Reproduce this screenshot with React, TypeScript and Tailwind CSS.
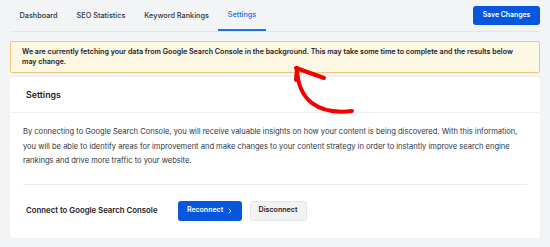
import React from "react";

export default function App() {
  const tabs = ["Dashboard", "SEO Statistics", "Keyword Rankings", "Settings"];
  return (
    <div
      className="relative w-[550px] h-[247px] bg-[#f3f4f6] overflow-hidden text-[#23282d]"
      style={{ fontFamily: "Inter, 'Noto Sans', sans-serif" }}
    >
      <div className="px-[10px]">
        <div className="flex items-end justify-between h-[32px] border-b border-[#e3e5e8]">
          <div className="flex h-full">
            {tabs.map((t) => (
              <div
                key={t}
                className={
                  t === "Settings"
                    ? "flex items-center px-[9.5px] h-full text-[7.3px] font-medium text-[#2271e0] border-b-[2px] border-[#2271e0] -mb-px"
                    : "flex items-center px-[9.5px] h-full text-[7.3px] font-medium text-[#2e3440]"
                }
              >
                <span className="pt-[1px]">{t}</span>
              </div>
            ))}
          </div>
          <div className="self-start mt-[6px] h-[19px] w-[67px] rounded-[3px] bg-[#0657dd] text-white text-[6.9px] font-semibold flex items-center justify-center">
            Save Changes
          </div>
        </div>

        <div className="mt-[9px] border border-[#e8c77c] bg-[#fcf8e3] rounded-[2px] px-[11px] pt-[5px] pb-[5px] text-[7.1px] font-semibold leading-[10px] text-[#1d2027]">
          We are currently fetching your data from Google Search Console in the background. This may take some time to complete and the results below may change.
        </div>

        <div className="mt-[4px] bg-white rounded-[2px] shadow-[0_0_1px_rgba(0,0,0,0.12)] h-[161px] flex flex-col">
          <div className="h-[36px] border-b border-[#f0f1f3] flex items-center px-[16px] text-[8.8px] font-semibold text-[#1d2027]">
            Settings
          </div>
          <div className="px-[13px] pt-[12px]">
            <p className="text-[7.55px] leading-[14.5px] text-[#2e3440]">
              By connecting to Google Search Console, you will receive valuable insights on how your content is being discovered. With this information, you will be able to identify areas for improvement and make changes to your content strategy in order to instantly improve search engine rankings and drive more traffic to your website.
            </p>
            <div className="mt-[15px] border-t border-[#e8eaed]" />
            <div className="flex items-center h-[52px] pl-[3px]">
              <span className="text-[7.8px] font-semibold text-[#1d2027]">Connect to Google Search Console</span>
              <div className="ml-[20px] h-[20px] w-[64px] rounded-[3px] bg-[#0657dd] text-white text-[7px] font-semibold flex items-center justify-center gap-[5px]">
                <span>Reconnect</span>
                <svg width="4" height="6" viewBox="0 0 4 6" fill="none">
                  <path d="M1 1 L3 3 L1 5" stroke="white" strokeWidth="0.8" strokeLinecap="round" strokeLinejoin="round" />
                </svg>
              </div>
              <div className="ml-[8px] h-[20px] w-[57px] rounded-[3px] bg-[#f1f2f4] border border-[#e4e6ea] text-[#1d2027] text-[7.1px] font-semibold flex items-center justify-center">
                Disconnect
              </div>
            </div>
          </div>
        </div>
      </div>

      <svg
        className="absolute left-0 top-0 pointer-events-none"
        width="550"
        height="247"
        viewBox="0 0 550 247"
        fill="none"
      >
        <path
          d="M352 111 C 318 115 298 100 297 69"
          stroke="#f40000"
          strokeWidth="4"
          strokeLinecap="round"
        />
        <path d="M296 68 L 324 78" stroke="#f40000" strokeWidth="4" strokeLinecap="round" />
        <path d="M297 68 L 296 80" stroke="#f40000" strokeWidth="4" strokeLinecap="round" />
      </svg>
    </div>
  );
}
